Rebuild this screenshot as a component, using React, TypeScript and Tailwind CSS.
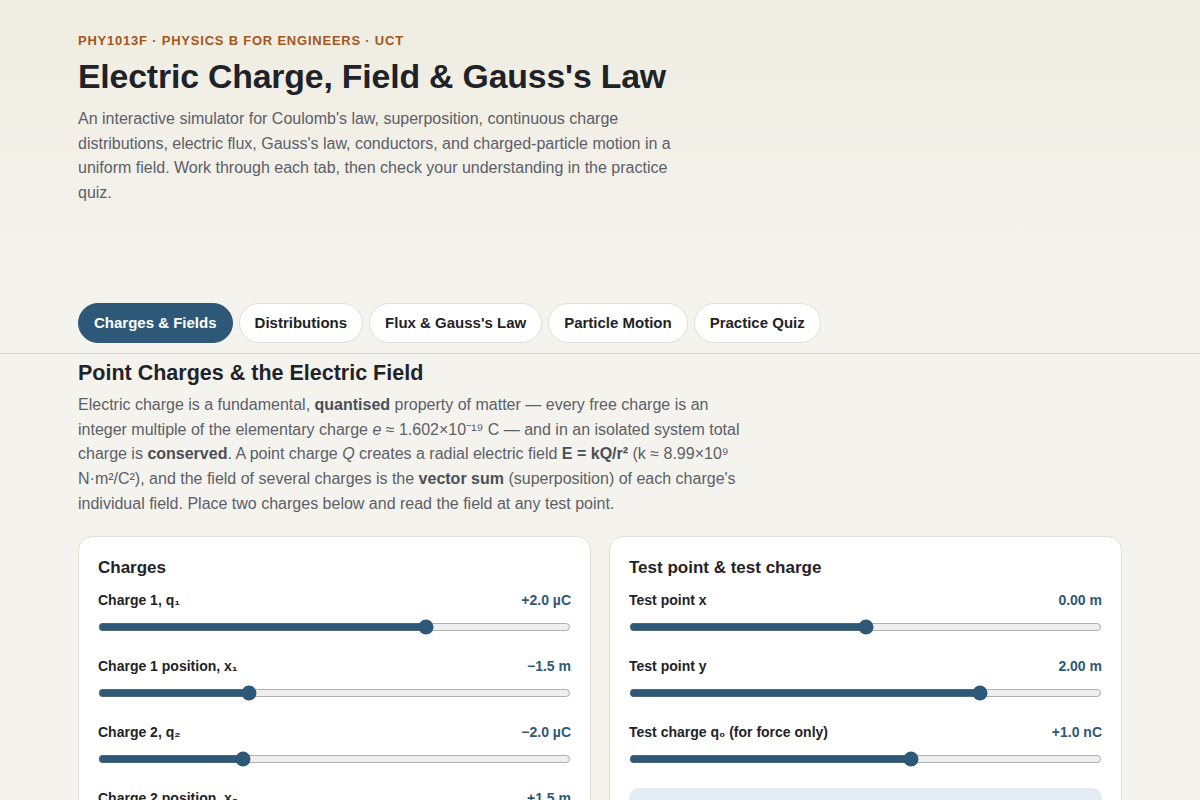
import React, { useState } from "react";

type SliderRowProps = {
  label: React.ReactNode;
  value: string;
  min: number;
  max: number;
  step: number;
  current: number;
  onChange: (v: number) => void;
};

const SliderRow: React.FC<SliderRowProps> = ({ label, value, min, max, step, current, onChange }) => (
  <div className="flex flex-col">
    <div className="flex h-5 items-center justify-between text-[14px] font-bold leading-5">
      <span className="text-[#1f2328]">{label}</span>
      <span className="text-[#2e5877]">{value}</span>
    </div>
    <input
      type="range"
      min={min}
      max={max}
      step={step}
      value={current}
      onChange={e => onChange(parseFloat(e.target.value))}
      className="mt-[9px] h-4 w-full accent-[#2e5877]"
    />
  </div>
);

const tabs = ["Charges & Fields", "Distributions", "Flux & Gauss's Law", "Particle Motion", "Practice Quiz"];

const fmtSigned = (v: number, d: number) => (v > 0 ? "+" : v < 0 ? "\u2212" : "") + Math.abs(v).toFixed(d);

export default function App() {
  const [active, setActive] = useState(0);
  const [q1, setQ1] = useState(2);
  const [x1, setX1] = useState(-1.5);
  const [q2, setQ2] = useState(-2);
  const [x2, setX2] = useState(1.5);
  const [tx, setTx] = useState(0);
  const [ty, setTy] = useState(2);
  const [q0, setQ0] = useState(1);

  return (
    <div
      className="min-h-screen bg-[#f5f3ee] text-[#1f2328]"
      style={{ fontFamily: '"Liberation Sans", Arial, sans-serif' }}
    >
      {/* Header */}
      <header className="bg-gradient-to-b from-[#efece1] to-[#f5f3ee]">
        <div className="mx-auto max-w-[1100px] px-7 pt-[33px] pb-[87px]">
          <div className="text-[13px] font-bold uppercase leading-4 tracking-[0.06em] text-[#a4561c]">
            PHY1013F · Physics B for Engineers · UCT
          </div>
          <h1 className="mt-[7px] text-[33.8px] font-bold leading-[40px] tracking-[-0.005em] text-[#1f2328]">
            Electric Charge, Field &amp; Gauss's Law
          </h1>
          <p className="mt-[11px] max-w-[620px] text-[16px] leading-[24.7px] text-[#5b6068]">
            An interactive simulator for Coulomb's law, superposition, continuous charge distributions, electric flux,
            Gauss's law, conductors, and charged-particle motion in a uniform field. Work through each tab, then check
            your understanding in the practice quiz.
          </p>
        </div>
      </header>

      {/* Tabs */}
      <nav className="border-b border-[#d9d6cf]">
        <div className="mx-auto flex max-w-[1100px] gap-[6px] px-7 pt-[10px] pb-[10px]">
          {tabs.map((t, i) => (
            <button
              key={t}
              onClick={() => setActive(i)}
              className={`h-10 rounded-full border px-[15px] text-[15px] font-bold ${
                active === i
                  ? "border-[#2e5877] bg-[#2e5877] text-white"
                  : "border-[#e2ded3] bg-white text-[#1f2328]"
              }`}
            >
              {t}
            </button>
          ))}
        </div>
      </nav>

      {/* Main */}
      <main className="mx-auto max-w-[1100px] px-7 pt-[5px]">
        <h2 className="text-[21.5px] font-bold leading-7 text-[#1f2328]">Point Charges &amp; the Electric Field</h2>
        <p className="mt-[6px] max-w-[672px] text-[16px] leading-[24.7px] text-[#5b6068]">
          Electric charge is a fundamental, <b className="text-[#4a4f56]">quantised</b> property of matter — every free
          charge is an integer multiple of the elementary charge <i>e</i> ≈ 1.602×10⁻¹⁹ C — and in an isolated system
          total charge is <b className="text-[#4a4f56]">conserved</b>. A point charge <i>Q</i> creates a radial electric
          field <b className="text-[#4a4f56]">E = kQ/r²</b> (k ≈ 8.99×10⁹ N·m²/C²), and the field of several charges is
          the <b className="text-[#4a4f56]">vector sum</b> (superposition) of each charge's individual field. Place two
          charges below and read the field at any test point.
        </p>

        <div className="mt-[20px] grid grid-cols-2 gap-[18px]">
          {/* Charges card */}
          <section className="rounded-[14px] border border-[#e3dfd4] bg-white px-[19px] pt-[19px] pb-5">
            <h3 className="text-[17px] font-bold leading-6">Charges</h3>
            <div className="mt-[10px] flex flex-col gap-[21px]">
              <SliderRow
                label="Charge 1, q₁"
                value={`${fmtSigned(q1, 1)} µC`}
                min={-5}
                max={5}
                step={0.1}
                current={q1}
                onChange={setQ1}
              />
              <SliderRow
                label="Charge 1 position, x₁"
                value={`${fmtSigned(x1, 1)} m`}
                min={-4}
                max={4}
                step={0.1}
                current={x1}
                onChange={setX1}
              />
              <SliderRow
                label="Charge 2, q₂"
                value={`${fmtSigned(q2, 1)} µC`}
                min={-5}
                max={5}
                step={0.1}
                current={q2}
                onChange={setQ2}
              />
              <SliderRow
                label="Charge 2 position, x₂"
                value={`${fmtSigned(x2, 1)} m`}
                min={-4}
                max={4}
                step={0.1}
                current={x2}
                onChange={setX2}
              />
            </div>
          </section>

          {/* Test point card */}
          <section className="rounded-[14px] border border-[#e3dfd4] bg-white px-[19px] pt-[19px] pb-5">
            <h3 className="text-[17px] font-bold leading-6">Test point &amp; test charge</h3>
            <div className="mt-[10px] flex flex-col gap-[21px]">
              <SliderRow
                label="Test point x"
                value={`${tx.toFixed(2)} m`}
                min={-4}
                max={4}
                step={0.05}
                current={tx}
                onChange={setTx}
              />
              <SliderRow
                label="Test point y"
                value={`${ty.toFixed(2)} m`}
                min={-4}
                max={4}
                step={0.05}
                current={ty}
                onChange={setTy}
              />
              <SliderRow
                label="Test charge q₀ (for force only)"
                value={`${fmtSigned(q0, 1)} nC`}
                min={-5}
                max={5}
                step={0.1}
                current={q0}
                onChange={setQ0}
              />
              <div className="h-[120px] rounded-[10px] bg-[#e4ecf3]" />
            </div>
          </section>
        </div>
      </main>
    </div>
  );
}
